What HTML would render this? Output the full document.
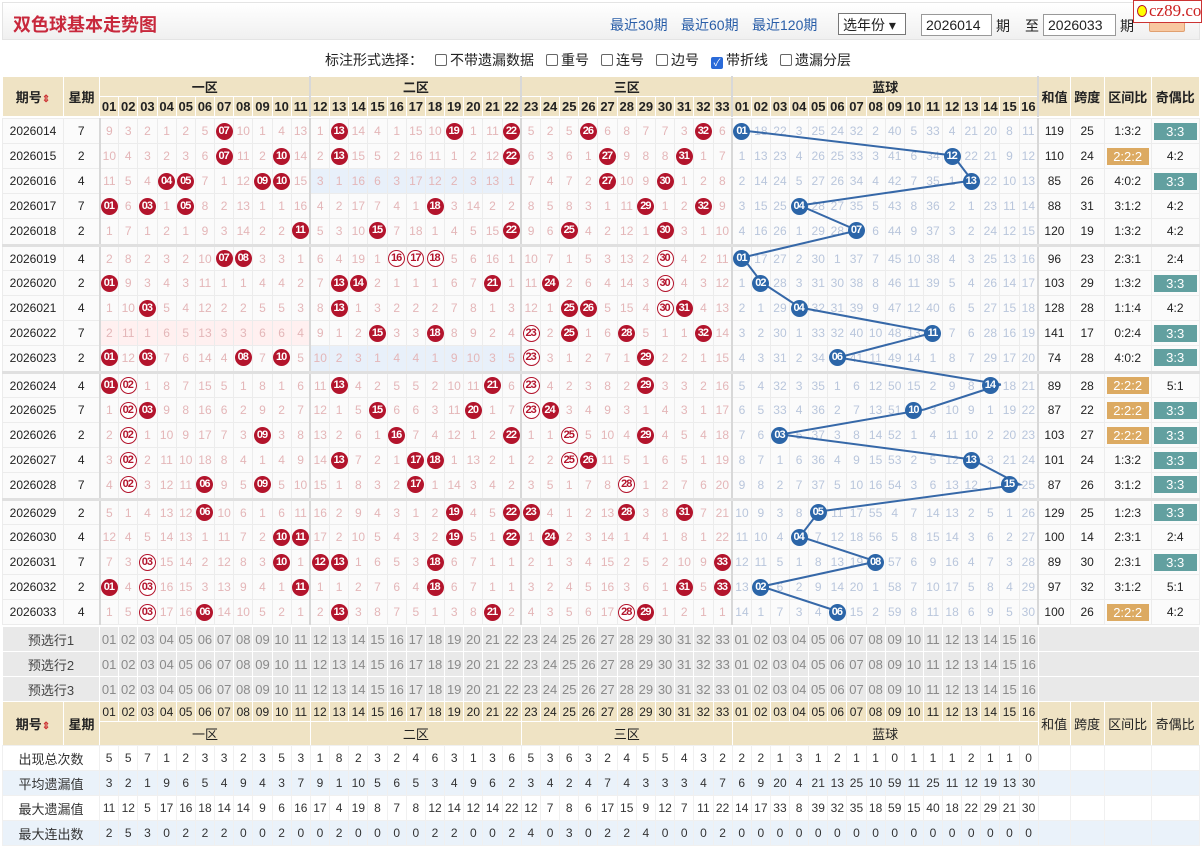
<!DOCTYPE html>
<html><head><meta charset="utf-8">
<style>
*{box-sizing:border-box;margin:0;padding:0}
body{width:1202px;height:847px;background:#fff;font-family:"Liberation Sans","Noto Sans CJK SC",sans-serif;position:relative;overflow:hidden;font-size:12px;color:#222}
.top{position:absolute;left:2px;top:2px;width:1198px;height:38px;background:linear-gradient(#fff,#f0f0f0);border:1px solid #e4e4e4}
.title{position:absolute;left:10px;top:8px;font-size:18px;font-weight:bold;color:#c8283c;font-family:"Noto Sans CJK SC",sans-serif}
.lk{position:absolute;top:12px;font-size:14px;color:#2a5ea8}
.sel{position:absolute;left:835px;top:10px;width:68px;height:22px;border:1px solid #777;background:#fff;font-size:14px;padding:1px 4px}
.inp{position:absolute;top:11px;height:22px;border:1px solid #999;background:#fff;font-size:14px;padding:2px 4px}
.tx{position:absolute;top:13px;font-size:14px}
.btn{position:absolute;left:1149px;top:14px;width:36px;height:18px;background:#f8c8a0;border:1px solid #e0a070;border-radius:2px}
.logo{position:absolute;left:1133px;top:0;width:69px;height:23px;background:#fff;border:1px solid #c33;color:#c22;font:17px/20px "Liberation Serif",serif;padding-left:3px;white-space:nowrap;overflow:hidden}
.logo i{display:inline-block;width:10px;height:12px;background:#ff0;margin-right:2px;vertical-align:-1px}
.opt{position:absolute;left:325px;top:50px;font-size:14px}
.cb{display:inline-block;width:12px;height:12px;border:1px solid #666;border-radius:2px;vertical-align:-1px;margin:0 3px 0 12px;background:#fff}
.cb.on{background:#2a6ad8;border-color:#2a6ad8;color:#fff;font-size:10px;line-height:11px;text-align:center}
table{position:absolute;left:2px;border-collapse:collapse;table-layout:fixed;width:1197px}
td,th{text-align:center;overflow:hidden;white-space:nowrap;padding:0}
.h th{background:#efe3c4;border:1px solid #fff;font-size:13px;font-weight:bold;height:20px}
.h .n th{font-size:13px}
.d td{height:25px;border:1px solid #ececec;font-size:12px;background:#fbfbfb}
.d tr.g td{height:27px;border-bottom:3px solid #e0e0e0;padding-bottom:2px}
.d td:nth-child(n+3){color:#e4b6b8;font-size:12px}
.d td:nth-child(n+36){color:#b9c6dc}
.d td:nth-child(n+52){color:#222}
.d td:nth-child(14),.d td:nth-child(25),.d td:nth-child(36),.d td:nth-child(52){border-left:2px solid #d8d8d8}
.d td:nth-child(3){border-left:2px solid #d8d8d8}
b,i,s{display:inline-block;width:17px;height:17px;border-radius:50%;font:bold 11px/17px "Liberation Sans",sans-serif;letter-spacing:-1px;text-decoration:none;font-style:normal;position:relative;z-index:3;text-align:center;padding-right:1px}
b{background:#b3142c;color:#fff}
i{background:#fff;color:#b3142c;border:1px solid #b3142c;line-height:15px}
s{background:#2b65a8;color:#fff}
em{display:block;font-style:normal;color:#fff;margin:0 2px;height:17px;line-height:17px;font-size:13px}
.t{background:#62a0a0}.o{background:#dcaa62}
.pb td{background:#fff0f0}.lb td{background:#e8f0fa}
.p td{height:25px;background:#e9e9e9;color:#8a8a8a;border:1px solid #fff;font-size:13px}
.p td:first-child{color:#444;font-size:13px}
.s td{height:25px;border:1px solid #f0f0f0;font-size:12px;color:#333}
.s tr:nth-child(even) td{background:#eaf2fa}
.s td:first-child{font-size:13px}
svg{position:absolute;left:0;top:0;z-index:2}
.zl{border-left:2px solid #d8d8d8 !important}
</style></head><body>
<div class="top">
<div class="title">双色球基本走势图</div>
<span class="lk" style="left:607px">最近30期</span><span class="lk" style="left:678px">最近60期</span><span class="lk" style="left:749px">最近120期</span>
<div class="sel">选年份 ▾</div>
<div class="inp" style="left:918px;width:71px">2026014</div><span class="tx" style="left:993px">期</span>
<span class="tx" style="left:1022px">至</span>
<div class="inp" style="left:1040px;width:73px">2026033</div><span class="tx" style="left:1117px">期</span>
</div>
<div class="btn"></div>
<div class="logo"><i></i>cz89.com</div>
<div class="opt">标注形式选择：<span class="cb"></span>不带遗漏数据<span class="cb"></span>重号<span class="cb"></span>连号<span class="cb"></span>边号<span class="cb on">✓</span>带折线<span class="cb"></span>遗漏分层</div>

<table class="h" style="top:76px">
<colgroup><col style="width:61px"><col style="width:36px"><col span="33" style="width:19.18px"><col span="16" style="width:19.125px"><col style="width:32px"><col style="width:34px"><col style="width:47px"><col style="width:48px"></colgroup>
<tr><th rowspan="2">期号<span style="color:#c33;font-size:10px">⇕</span></th><th rowspan="2">星期</th><th colspan="11">一区</th><th colspan="11" class="zl">二区</th><th colspan="11" class="zl">三区</th><th colspan="16" class="zl">蓝球</th><th rowspan="2" class="zl">和值</th><th rowspan="2">跨度</th><th rowspan="2">区间比</th><th rowspan="2">奇偶比</th></tr>
<tr class="n"><th>01</th><th>02</th><th>03</th><th>04</th><th>05</th><th>06</th><th>07</th><th>08</th><th>09</th><th>10</th><th>11</th><th class="zl">12</th><th>13</th><th>14</th><th>15</th><th>16</th><th>17</th><th>18</th><th>19</th><th>20</th><th>21</th><th>22</th><th class="zl">23</th><th>24</th><th>25</th><th>26</th><th>27</th><th>28</th><th>29</th><th>30</th><th>31</th><th>32</th><th>33</th><th class="zl">01</th><th>02</th><th>03</th><th>04</th><th>05</th><th>06</th><th>07</th><th>08</th><th>09</th><th>10</th><th>11</th><th>12</th><th>13</th><th>14</th><th>15</th><th>16</th></tr>
</table>

<table class="d" style="top:118px">
<colgroup><col style="width:61px"><col style="width:36px"><col span="33" style="width:19.18px"><col span="16" style="width:19.125px"><col style="width:32px"><col style="width:34px"><col style="width:47px"><col style="width:48px"></colgroup>
<tr><td>2026014<td>7<td>9<td>3<td>2<td>1<td>2<td>5<td><b>07</b><td>10<td>1<td>4<td>13<td>1<td><b>13</b><td>14<td>4<td>1<td>15<td>10<td><b>19</b><td>1<td>11<td><b>22</b><td>5<td>2<td>5<td><b>26</b><td>6<td>8<td>7<td>7<td>3<td><b>32</b><td>6<td><s>01</s><td>18<td>22<td>3<td>25<td>24<td>32<td>2<td>40<td>5<td>33<td>4<td>21<td>20<td>8<td>11<td>119<td>25<td>1:3:2<td><em class="t">3:3</em></tr>
<tr><td>2026015<td>2<td>10<td>4<td>3<td>2<td>3<td>6<td><b>07</b><td>11<td>2<td><b>10</b><td>14<td>2<td><b>13</b><td>15<td>5<td>2<td>16<td>11<td>1<td>2<td>12<td><b>22</b><td>6<td>3<td>6<td>1<td><b>27</b><td>9<td>8<td>8<td><b>31</b><td>1<td>7<td>1<td>13<td>23<td>4<td>26<td>25<td>33<td>3<td>41<td>6<td>34<td><s>12</s><td>22<td>21<td>9<td>12<td>110<td>24<td><em class="o">2:2:2</em><td>4:2</tr>
<tr><td>2026016<td>4<td>11<td>5<td>4<td><b>04</b><td><b>05</b><td>7<td>1<td>12<td><b>09</b><td><b>10</b><td>15<td style="background:#e8f0fa">3<td style="background:#e8f0fa">1<td style="background:#e8f0fa">16<td style="background:#e8f0fa">6<td style="background:#e8f0fa">3<td style="background:#e8f0fa">17<td style="background:#e8f0fa">12<td style="background:#e8f0fa">2<td style="background:#e8f0fa">3<td style="background:#e8f0fa">13<td style="background:#e8f0fa">1<td>7<td>4<td>7<td>2<td><b>27</b><td>10<td>9<td><b>30</b><td>1<td>2<td>8<td>2<td>14<td>24<td>5<td>27<td>26<td>34<td>4<td>42<td>7<td>35<td>1<td><s>13</s><td>22<td>10<td>13<td>85<td>26<td>4:0:2<td><em class="t">3:3</em></tr>
<tr><td>2026017<td>7<td><b>01</b><td>6<td><b>03</b><td>1<td><b>05</b><td>8<td>2<td>13<td>1<td>1<td>16<td>4<td>2<td>17<td>7<td>4<td>1<td><b>18</b><td>3<td>14<td>2<td>2<td>8<td>5<td>8<td>3<td>1<td>11<td><b>29</b><td>1<td>2<td><b>32</b><td>9<td>3<td>15<td>25<td><s>04</s><td>28<td>27<td>35<td>5<td>43<td>8<td>36<td>2<td>1<td>23<td>11<td>14<td>88<td>31<td>3:1:2<td>4:2</tr>
<tr class="g"><td>2026018<td>2<td>1<td>7<td>1<td>2<td>1<td>9<td>3<td>14<td>2<td>2<td><b>11</b><td>5<td>3<td>10<td><b>15</b><td>7<td>18<td>1<td>4<td>5<td>15<td><b>22</b><td>9<td>6<td><b>25</b><td>4<td>2<td>12<td>1<td><b>30</b><td>3<td>1<td>10<td>4<td>16<td>26<td>1<td>29<td>28<td><s>07</s><td>6<td>44<td>9<td>37<td>3<td>2<td>24<td>12<td>15<td>120<td>19<td>1:3:2<td>4:2</tr>
<tr><td>2026019<td>4<td>2<td>8<td>2<td>3<td>2<td>10<td><b>07</b><td><b>08</b><td>3<td>3<td>1<td>6<td>4<td>19<td>1<td><i>16</i><td><i>17</i><td><i>18</i><td>5<td>6<td>16<td>1<td>10<td>7<td>1<td>5<td>3<td>13<td>2<td><i>30</i><td>4<td>2<td>11<td><s>01</s><td>17<td>27<td>2<td>30<td>1<td>37<td>7<td>45<td>10<td>38<td>4<td>3<td>25<td>13<td>16<td>96<td>23<td>2:3:1<td>2:4</tr>
<tr><td>2026020<td>2<td><b>01</b><td>9<td>3<td>4<td>3<td>11<td>1<td>1<td>4<td>4<td>2<td>7<td><b>13</b><td><b>14</b><td>2<td>1<td>1<td>1<td>6<td>7<td><b>21</b><td>1<td>11<td><b>24</b><td>2<td>6<td>4<td>14<td>3<td><i>30</i><td>4<td>3<td>12<td>1<td><s>02</s><td>28<td>3<td>31<td>30<td>38<td>8<td>46<td>11<td>39<td>5<td>4<td>26<td>14<td>17<td>103<td>29<td>1:3:2<td><em class="t">3:3</em></tr>
<tr><td>2026021<td>4<td>1<td>10<td><b>03</b><td>5<td>4<td>12<td>2<td>2<td>5<td>5<td>3<td>8<td><b>13</b><td>1<td>3<td>2<td>2<td>2<td>7<td>8<td>1<td>3<td>12<td>1<td><b>25</b><td><b>26</b><td>5<td>15<td>4<td><i>30</i><td><b>31</b><td>4<td>13<td>2<td>1<td>29<td><s>04</s><td>32<td>31<td>39<td>9<td>47<td>12<td>40<td>6<td>5<td>27<td>15<td>18<td>128<td>28<td>1:1:4<td>4:2</tr>
<tr class="pb"><td style="background:#fbfbfb">2026022<td style="background:#fbfbfb">7<td>2<td>11<td>1<td>6<td>5<td>13<td>3<td>3<td>6<td>6<td>4<td style="background:#fbfbfb">9<td style="background:#fbfbfb">1<td style="background:#fbfbfb">2<td style="background:#fbfbfb"><b>15</b><td style="background:#fbfbfb">3<td style="background:#fbfbfb">3<td style="background:#fbfbfb"><b>18</b><td style="background:#fbfbfb">8<td style="background:#fbfbfb">9<td style="background:#fbfbfb">2<td style="background:#fbfbfb">4<td style="background:#fbfbfb"><i>23</i><td style="background:#fbfbfb">2<td style="background:#fbfbfb"><b>25</b><td style="background:#fbfbfb">1<td style="background:#fbfbfb">6<td style="background:#fbfbfb"><b>28</b><td style="background:#fbfbfb">5<td style="background:#fbfbfb">1<td style="background:#fbfbfb">1<td style="background:#fbfbfb"><b>32</b><td style="background:#fbfbfb">14<td style="background:#fbfbfb">3<td style="background:#fbfbfb">2<td style="background:#fbfbfb">30<td style="background:#fbfbfb">1<td style="background:#fbfbfb">33<td style="background:#fbfbfb">32<td style="background:#fbfbfb">40<td style="background:#fbfbfb">10<td style="background:#fbfbfb">48<td style="background:#fbfbfb">13<td style="background:#fbfbfb"><s>11</s><td style="background:#fbfbfb">7<td style="background:#fbfbfb">6<td style="background:#fbfbfb">28<td style="background:#fbfbfb">16<td style="background:#fbfbfb">19<td style="background:#fbfbfb">141<td style="background:#fbfbfb">17<td style="background:#fbfbfb">0:2:4<td style="background:#fbfbfb"><em class="t">3:3</em></tr>
<tr class="g"><td>2026023<td>2<td><b>01</b><td>12<td><b>03</b><td>7<td>6<td>14<td>4<td><b>08</b><td>7<td><b>10</b><td>5<td style="background:#e8f0fa">10<td style="background:#e8f0fa">2<td style="background:#e8f0fa">3<td style="background:#e8f0fa">1<td style="background:#e8f0fa">4<td style="background:#e8f0fa">4<td style="background:#e8f0fa">1<td style="background:#e8f0fa">9<td style="background:#e8f0fa">10<td style="background:#e8f0fa">3<td style="background:#e8f0fa">5<td><i>23</i><td>3<td>1<td>2<td>7<td>1<td><b>29</b><td>2<td>2<td>1<td>15<td>4<td>3<td>31<td>2<td>34<td><s>06</s><td>41<td>11<td>49<td>14<td>1<td>8<td>7<td>29<td>17<td>20<td>74<td>28<td>4:0:2<td><em class="t">3:3</em></tr>
<tr><td>2026024<td>4<td><b>01</b><td><i>02</i><td>1<td>8<td>7<td>15<td>5<td>1<td>8<td>1<td>6<td>11<td><b>13</b><td>4<td>2<td>5<td>5<td>2<td>10<td>11<td><b>21</b><td>6<td><i>23</i><td>4<td>2<td>3<td>8<td>2<td><b>29</b><td>3<td>3<td>2<td>16<td>5<td>4<td>32<td>3<td>35<td>1<td>6<td>12<td>50<td>15<td>2<td>9<td>8<td><s>14</s><td>18<td>21<td>89<td>28<td><em class="o">2:2:2</em><td>5:1</tr>
<tr><td>2026025<td>7<td>1<td><i>02</i><td><b>03</b><td>9<td>8<td>16<td>6<td>2<td>9<td>2<td>7<td>12<td>1<td>5<td><b>15</b><td>6<td>6<td>3<td>11<td><b>20</b><td>1<td>7<td><i>23</i><td><b>24</b><td>3<td>4<td>9<td>3<td>1<td>4<td>3<td>1<td>17<td>6<td>5<td>33<td>4<td>36<td>2<td>7<td>13<td>51<td><s>10</s><td>3<td>10<td>9<td>1<td>19<td>22<td>87<td>22<td><em class="o">2:2:2</em><td><em class="t">3:3</em></tr>
<tr><td>2026026<td>2<td>2<td><i>02</i><td>1<td>10<td>9<td>17<td>7<td>3<td><b>09</b><td>3<td>8<td>13<td>2<td>6<td>1<td><b>16</b><td>7<td>4<td>12<td>1<td>2<td><b>22</b><td>1<td>1<td><i>25</i><td>5<td>10<td>4<td><b>29</b><td>4<td>5<td>4<td>18<td>7<td>6<td><s>03</s><td>5<td>37<td>3<td>8<td>14<td>52<td>1<td>4<td>11<td>10<td>2<td>20<td>23<td>103<td>27<td><em class="o">2:2:2</em><td><em class="t">3:3</em></tr>
<tr><td>2026027<td>4<td>3<td><i>02</i><td>2<td>11<td>10<td>18<td>8<td>4<td>1<td>4<td>9<td>14<td><b>13</b><td>7<td>2<td>1<td><b>17</b><td><b>18</b><td>1<td>13<td>2<td>1<td>2<td>2<td><i>25</i><td><b>26</b><td>11<td>5<td>1<td>6<td>5<td>1<td>19<td>8<td>7<td>1<td>6<td>36<td>4<td>9<td>15<td>53<td>2<td>5<td>12<td><s>13</s><td>3<td>21<td>24<td>101<td>24<td>1:3:2<td><em class="t">3:3</em></tr>
<tr class="g"><td>2026028<td>7<td>4<td><i>02</i><td>3<td>12<td>11<td><b>06</b><td>9<td>5<td><b>09</b><td>5<td>10<td>15<td>1<td>8<td>3<td>2<td><b>17</b><td>1<td>14<td>3<td>4<td>2<td>3<td>5<td>1<td>7<td>8<td><i>28</i><td>1<td>2<td>7<td>6<td>20<td>9<td>8<td>2<td>7<td>37<td>5<td>10<td>16<td>54<td>3<td>6<td>13<td>12<td>1<td><s>15</s><td>25<td>87<td>26<td>3:1:2<td><em class="t">3:3</em></tr>
<tr><td>2026029<td>2<td>5<td>1<td>4<td>13<td>12<td><b>06</b><td>10<td>6<td>1<td>6<td>11<td>16<td>2<td>9<td>4<td>3<td>1<td>2<td><b>19</b><td>4<td>5<td><b>22</b><td><b>23</b><td>4<td>1<td>2<td>13<td><b>28</b><td>3<td>8<td><b>31</b><td>7<td>21<td>10<td>9<td>3<td>8<td><s>05</s><td>11<td>17<td>55<td>4<td>7<td>14<td>13<td>2<td>5<td>1<td>26<td>129<td>25<td>1:2:3<td><em class="t">3:3</em></tr>
<tr><td>2026030<td>4<td>12<td>4<td>5<td>14<td>13<td>1<td>11<td>7<td>2<td><b>10</b><td><b>11</b><td>17<td>2<td>10<td>5<td>4<td>3<td>2<td><b>19</b><td>5<td>1<td><b>22</b><td>1<td><b>24</b><td>2<td>3<td>14<td>1<td>4<td>1<td>8<td>1<td>22<td>11<td>10<td>4<td><s>04</s><td>7<td>12<td>18<td>56<td>5<td>8<td>15<td>14<td>3<td>6<td>2<td>27<td>100<td>14<td>2:3:1<td>2:4</tr>
<tr><td>2026031<td>7<td>7<td>3<td><i>03</i><td>15<td>14<td>2<td>12<td>8<td>3<td><b>10</b><td>1<td><b>12</b><td><b>13</b><td>1<td>6<td>5<td>3<td><b>18</b><td>6<td>7<td>1<td>1<td>2<td>1<td>3<td>4<td>15<td>2<td>5<td>2<td>10<td>9<td><b>33</b><td>12<td>11<td>5<td>1<td>8<td>13<td>19<td><s>08</s><td>57<td>6<td>9<td>16<td>4<td>7<td>3<td>28<td>89<td>30<td>2:3:1<td><em class="t">3:3</em></tr>
<tr><td>2026032<td>2<td><b>01</b><td>4<td><i>03</i><td>16<td>15<td>3<td>13<td>9<td>4<td>1<td><b>11</b><td>1<td>1<td>2<td>7<td>6<td>4<td><b>18</b><td>6<td>7<td>1<td>1<td>3<td>2<td>4<td>5<td>16<td>3<td>6<td>1<td><b>31</b><td>5<td><b>33</b><td>13<td><s>02</s><td>6<td>2<td>9<td>14<td>20<td>1<td>58<td>7<td>10<td>17<td>5<td>8<td>4<td>29<td>97<td>32<td>3:1:2<td>5:1</tr>
<tr><td>2026033<td>4<td>1<td>5<td><i>03</i><td>17<td>16<td><b>06</b><td>14<td>10<td>5<td>2<td>1<td>2<td><b>13</b><td>3<td>8<td>7<td>5<td>1<td>3<td>8<td><b>21</b><td>2<td>4<td>3<td>5<td>6<td>17<td><i>28</i><td><b>29</b><td>1<td>2<td>1<td>1<td>14<td>1<td>7<td>3<td>4<td><s>06</s><td>15<td>2<td>59<td>8<td>11<td>18<td>6<td>9<td>5<td>30<td>100<td>26<td><em class="o">2:2:2</em><td>4:2</tr>
</table>

<svg width="1202" height="847"><polyline fill="none" stroke="#3668a8" stroke-width="2" points="742.6,130.5 953,155.5 972.1,180.5 799.9,205.5 857.3,230.5 742.6,257.5 761.7,282.5 799.9,307.5 933.9,332.5 838.2,357.5 1000.8,384.5 924.3,409.5 780.8,434.5 972.1,459.5 1019.9,484.5 819.1,511.5 799.9,536.5 876.4,561.5 761.7,586.5 838.2,611.5"/></svg>

<table class="p" style="top:626px">
<colgroup><col style="width:97px"><col span="33" style="width:19.18px"><col span="16" style="width:19.125px"><col style="width:161px"></colgroup>
<tr><td>预选行1<td>01<td>02<td>03<td>04<td>05<td>06<td>07<td>08<td>09<td>10<td>11<td>12<td>13<td>14<td>15<td>16<td>17<td>18<td>19<td>20<td>21<td>22<td>23<td>24<td>25<td>26<td>27<td>28<td>29<td>30<td>31<td>32<td>33<td>01<td>02<td>03<td>04<td>05<td>06<td>07<td>08<td>09<td>10<td>11<td>12<td>13<td>14<td>15<td>16<td></tr>
<tr><td>预选行2<td>01<td>02<td>03<td>04<td>05<td>06<td>07<td>08<td>09<td>10<td>11<td>12<td>13<td>14<td>15<td>16<td>17<td>18<td>19<td>20<td>21<td>22<td>23<td>24<td>25<td>26<td>27<td>28<td>29<td>30<td>31<td>32<td>33<td>01<td>02<td>03<td>04<td>05<td>06<td>07<td>08<td>09<td>10<td>11<td>12<td>13<td>14<td>15<td>16<td></tr>
<tr><td>预选行3<td>01<td>02<td>03<td>04<td>05<td>06<td>07<td>08<td>09<td>10<td>11<td>12<td>13<td>14<td>15<td>16<td>17<td>18<td>19<td>20<td>21<td>22<td>23<td>24<td>25<td>26<td>27<td>28<td>29<td>30<td>31<td>32<td>33<td>01<td>02<td>03<td>04<td>05<td>06<td>07<td>08<td>09<td>10<td>11<td>12<td>13<td>14<td>15<td>16<td></tr>
</table>

<table class="h" style="top:701px">
<colgroup><col style="width:61px"><col style="width:36px"><col span="33" style="width:19.18px"><col span="16" style="width:19.125px"><col style="width:32px"><col style="width:34px"><col style="width:47px"><col style="width:48px"></colgroup>
<tr class="n" style="font-weight:normal"><th rowspan="2" style="height:44px">期号<span style="color:#c33;font-size:10px">⇕</span></th><th rowspan="2">星期</th><th style="font-weight:normal;font-size:12px">01</th><th style="font-weight:normal;font-size:12px">02</th><th style="font-weight:normal;font-size:12px">03</th><th style="font-weight:normal;font-size:12px">04</th><th style="font-weight:normal;font-size:12px">05</th><th style="font-weight:normal;font-size:12px">06</th><th style="font-weight:normal;font-size:12px">07</th><th style="font-weight:normal;font-size:12px">08</th><th style="font-weight:normal;font-size:12px">09</th><th style="font-weight:normal;font-size:12px">10</th><th style="font-weight:normal;font-size:12px">11</th><th style="font-weight:normal;font-size:12px">12</th><th style="font-weight:normal;font-size:12px">13</th><th style="font-weight:normal;font-size:12px">14</th><th style="font-weight:normal;font-size:12px">15</th><th style="font-weight:normal;font-size:12px">16</th><th style="font-weight:normal;font-size:12px">17</th><th style="font-weight:normal;font-size:12px">18</th><th style="font-weight:normal;font-size:12px">19</th><th style="font-weight:normal;font-size:12px">20</th><th style="font-weight:normal;font-size:12px">21</th><th style="font-weight:normal;font-size:12px">22</th><th style="font-weight:normal;font-size:12px">23</th><th style="font-weight:normal;font-size:12px">24</th><th style="font-weight:normal;font-size:12px">25</th><th style="font-weight:normal;font-size:12px">26</th><th style="font-weight:normal;font-size:12px">27</th><th style="font-weight:normal;font-size:12px">28</th><th style="font-weight:normal;font-size:12px">29</th><th style="font-weight:normal;font-size:12px">30</th><th style="font-weight:normal;font-size:12px">31</th><th style="font-weight:normal;font-size:12px">32</th><th style="font-weight:normal;font-size:12px">33</th><th style="font-weight:normal;font-size:12px">01</th><th style="font-weight:normal;font-size:12px">02</th><th style="font-weight:normal;font-size:12px">03</th><th style="font-weight:normal;font-size:12px">04</th><th style="font-weight:normal;font-size:12px">05</th><th style="font-weight:normal;font-size:12px">06</th><th style="font-weight:normal;font-size:12px">07</th><th style="font-weight:normal;font-size:12px">08</th><th style="font-weight:normal;font-size:12px">09</th><th style="font-weight:normal;font-size:12px">10</th><th style="font-weight:normal;font-size:12px">11</th><th style="font-weight:normal;font-size:12px">12</th><th style="font-weight:normal;font-size:12px">13</th><th style="font-weight:normal;font-size:12px">14</th><th style="font-weight:normal;font-size:12px">15</th><th style="font-weight:normal;font-size:12px">16</th><th rowspan="2" style="font-weight:normal">和值</th><th rowspan="2" style="font-weight:normal">跨度</th><th rowspan="2" style="font-weight:normal">区间比</th><th rowspan="2" style="font-weight:normal">奇偶比</th></tr>
<tr><th colspan="11" style="font-weight:normal;height:23px">一区</th><th colspan="11" style="font-weight:normal">二区</th><th colspan="11" style="font-weight:normal">三区</th><th colspan="16" style="font-weight:normal">蓝球</th></tr>
</table>

<table class="s" style="top:745px">
<colgroup><col style="width:97px"><col span="33" style="width:19.18px"><col span="16" style="width:19.125px"><col style="width:32px"><col style="width:34px"><col style="width:47px"><col style="width:48px"></colgroup>
<tr><td>出现总次数<td>5<td>5<td>7<td>1<td>2<td>3<td>3<td>2<td>3<td>5<td>3<td>1<td>8<td>2<td>3<td>2<td>4<td>6<td>3<td>1<td>3<td>6<td>5<td>3<td>6<td>3<td>2<td>4<td>5<td>5<td>4<td>3<td>2<td>2<td>2<td>1<td>3<td>1<td>2<td>1<td>1<td>0<td>1<td>1<td>1<td>2<td>1<td>1<td>0<td><td><td><td></tr>
<tr><td>平均遗漏值<td>3<td>2<td>1<td>9<td>6<td>5<td>4<td>9<td>4<td>3<td>7<td>9<td>1<td>10<td>5<td>6<td>5<td>3<td>4<td>9<td>6<td>2<td>3<td>4<td>2<td>4<td>7<td>4<td>3<td>3<td>3<td>4<td>7<td>6<td>9<td>20<td>4<td>21<td>13<td>25<td>10<td>59<td>11<td>25<td>11<td>12<td>19<td>13<td>30<td><td><td><td></tr>
<tr><td>最大遗漏值<td>11<td>12<td>5<td>17<td>16<td>18<td>14<td>14<td>9<td>6<td>16<td>17<td>4<td>19<td>8<td>7<td>8<td>12<td>14<td>12<td>14<td>22<td>12<td>7<td>8<td>6<td>17<td>15<td>9<td>12<td>7<td>11<td>22<td>14<td>17<td>33<td>8<td>39<td>32<td>35<td>18<td>59<td>15<td>40<td>18<td>22<td>29<td>21<td>30<td><td><td><td></tr>
<tr><td>最大连出数<td>2<td>5<td>3<td>0<td>2<td>2<td>2<td>0<td>0<td>2<td>0<td>0<td>2<td>0<td>0<td>0<td>0<td>2<td>2<td>0<td>0<td>2<td>4<td>0<td>3<td>0<td>2<td>2<td>4<td>0<td>0<td>0<td>2<td>0<td>0<td>0<td>0<td>0<td>0<td>0<td>0<td>0<td>0<td>0<td>0<td>0<td>0<td>0<td>0<td><td><td><td></tr>
</table>
</body></html>
